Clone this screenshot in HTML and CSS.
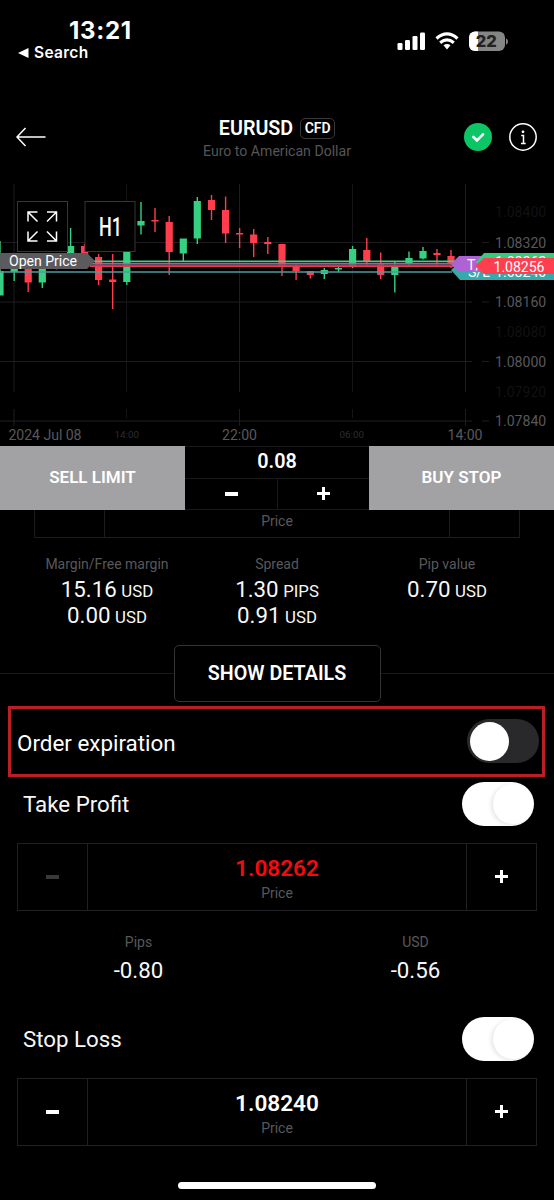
FILE: index.html
```html
<!DOCTYPE html>
<html lang="en">
<head>
<meta charset="utf-8">
<title>EURUSD order</title>
<link rel="stylesheet" href="styles.css">
</head>
<body>
<div class="phone">
  <div class="status">
    <div class="status-left">
      <div class="clock">13:21</div>
      <div class="back-app"><svg width="11" height="10" viewBox="0 0 11 10"><path d="M0 5 10.500 0v10z" fill="#fff"/></svg><span>Search</span></div>
    </div>
    <svg class="status-icons" width="118" height="24" viewBox="0 0 118 24">
      <g fill="#fff">
        <rect x="3.500" y="13" width="5" height="7" rx="1.300"/><rect x="11" y="10" width="5" height="10" rx="1.300"/><rect x="18.500" y="6" width="5" height="14" rx="1.300"/><rect x="26" y="2.500" width="5" height="17.500" rx="1.300"/>
        <path d="M49.500 15.300q3.500-2.600 7 0L53 19.500z"/>
      </g>
      <g fill="none" stroke="#fff" stroke-width="3.200"><path d="M42.500 8.500Q53-.6 63.500 8.500"/><path d="M46.200 12.700Q53 7 59.800 12.700"/></g>
      <clipPath id="batt"><rect x="75" y="1.500" width="36" height="19.500" rx="6"/></clipPath>
      <g clip-path="url(#batt)"><rect x="75" y="1" width="36" height="21" fill="#858585"/><rect x="75" y="1" width="9" height="21" fill="#fff"/></g>
      <path d="M112 8.500q2 .5 2 3t-2 3z" fill="#858585"/>
      <text x="92.300" y="17" class="batt-text" text-anchor="middle" textLength="21" lengthAdjust="spacingAndGlyphs">22</text>
    </svg>
  </div>

  <header class="header">
    <svg class="arrow" width="30" height="20" viewBox="0 0 30 20"><path d="M29.500 10H1M9.500 1 1 10l8.500 9" fill="none" stroke="#fff" stroke-width="1.500"/></svg>
    <div class="title">
      <div class="title-row"><span class="symbol">EURUSD</span><span class="tag">CFD</span></div>
      <div class="subtitle">Euro to American Dollar</div>
    </div>
    <div class="header-icons">
      <svg width="28" height="28" viewBox="0 0 28 28"><circle cx="14" cy="14" r="14" fill="#0cc666"/><path d="m9.400 14 3.500 3.400 6.100-6" fill="none" stroke="#fff" stroke-width="2.700" stroke-linecap="round"/></svg>
      <svg width="28" height="28" viewBox="0 0 28 28"><circle cx="14" cy="14" r="13.200" fill="none" stroke="#fff" stroke-width="1.500"/><circle cx="14" cy="8.800" r="1.400" fill="#fff"/><path d="M12.200 12.600h2.300v7.800M12 20.400h4.700" fill="none" stroke="#fff" stroke-width="1.500"/></svg>
    </div>
  </header>

  <svg class="chart" width="554" height="266" viewBox="0 180 554 266">
    <g class="grid">
      <path d="M0 242.500H472M482 242.500h7M0 302H472M482 302h7M0 361.500H472M482 361.500h7M0 421H472M482 421h7"/>
      <path d="M14 184V392M14 409v17M239.500 184V392M239.500 409v17M465.500 184V392M465.500 409v17"/>
      <path class="faint" d="M126.500 184V392M126.500 409v9M352.500 184V392M352.500 409v9"/>
    </g>
    <g class="axis">
      <text class="ghost" x="495" y="217">1.08400</text>
      <text x="495" y="247.500">1.08320</text>
      <text x="495" y="307">1.08160</text>
      <text class="ghost" x="495" y="337">1.08080</text>
      <text x="495" y="366.500">1.08000</text>
      <text class="ghost" x="495" y="397">1.07920</text>
      <text x="495" y="426">1.07840</text>
      <text x="8.500" y="440" textLength="73">2024 Jul 08</text>
      <text class="minor" x="114.500" y="437.500">14:00</text>
      <text x="222" y="440" textLength="35">22:00</text>
      <text class="minor" x="339.500" y="437.500">06:00</text>
      <text x="447.500" y="440" textLength="35">14:00</text>
    </g>
    <g id="candles"></g>
    <g fill="none">
      <path d="M90 264.500H455" stroke="#77506f" stroke-opacity=".85" stroke-width="3"/>
      <path d="M90 261.200H490" stroke="#3fd18a" stroke-width="1.500"/>
      <path d="M90 263.200H455" stroke="#8f8f98" stroke-width="1"/>
      <path d="M90 266.300H480" stroke="#e83a55" stroke-width="1.400"/>
      <path d="M0 272H452" stroke="#4f9a9e" stroke-width="1.600"/>
    </g>
    <path d="M0 253H87l8 8-8 8H0z" fill="#5b5a5f"/>
    <text class="label" x="9" y="266" textLength="68">Open Price</text>
    <path d="m451 270 9-8h94v18h-94z" fill="#36a9ad"/>
    <text class="label" x="468" y="277">S/L</text><text class="label" x="495" y="277">1.08240</text>
    <path d="m451 264 8-8h40v16h-40z" fill="#ae63d4"/>
    <text class="label" x="467" y="269.500">T/P</text>
    <path d="m476 262 8-9h70v17h-70z" fill="#35cc7d"/>
    <text class="label" x="495" y="267">1.08262</text>
    <path d="m475 266 9-8h70v16h-70z" fill="#ff3e50"/>
    <text class="label" x="493.500" y="271.500" textLength="51">1.08256</text>
    <g fill="#000" stroke="#37343a"><rect x="17.500" y="201.500" width="50" height="50"/><rect x="85" y="201.500" width="50" height="50"/></g>
    <path d="M37.500 212H28v9.500M28 212l9.500 9.500M47 212h9.500v9.500M56.500 212 47 221.500M28 231.500V241h9.500M28 241l9.500-9.500M56.500 231.500V241H47M56.500 241 47 231.500" fill="none" stroke="#fff" stroke-width="1.500"/>
    <text class="period" x="99" y="235.500" textLength="23" lengthAdjust="spacingAndGlyphs">H1</text>
  </svg>

  <div class="trade">
    <div class="side">SELL LIMIT</div>
    <div class="volume">
      <div class="volume-value">0.08</div>
      <div class="volume-btns"><div><i class="minus"></i></div><div><i class="plus"></i></div></div>
    </div>
    <div class="side">BUY STOP</div>
  </div>

  <div class="clipped"><div></div><div class="caption">Price</div><div></div></div>

  <div class="metrics">
    <div><div class="caption">Margin/Free margin</div><div class="value">15.16 <small>USD</small></div><div class="value">0.00 <small>USD</small></div></div>
    <div><div class="caption">Spread</div><div class="value">1.30 <small>PIPS</small></div><div class="value">0.91 <small>USD</small></div></div>
    <div><div class="caption">Pip value</div><div class="value">0.70 <small>USD</small></div></div>
  </div>

  <div class="details"><button class="details-btn">SHOW DETAILS</button></div>

  <div class="expiration"><span>Order expiration</span><span class="switch"></span></div>

  <div class="option"><span>Take Profit</span><span class="switch on"></span></div>
  <div class="stepper">
    <div class="disabled"><i class="minus"></i></div>
    <div class="field"><div class="amount red">1.08262</div><div class="caption">Price</div></div>
    <div><i class="plus"></i></div>
  </div>
  <div class="results">
    <div><div class="caption">Pips</div><div class="value">-0.80</div></div>
    <div><div class="caption">USD</div><div class="value">-0.56</div></div>
  </div>

  <div class="option"><span>Stop Loss</span><span class="switch on"></span></div>
  <div class="stepper">
    <div><i class="minus"></i></div>
    <div class="field"><div class="amount">1.08240</div><div class="caption">Price</div></div>
    <div><i class="plus"></i></div>
  </div>
  <div class="home"></div>
</div>
<script src="chart.js"></script>
</body>
</html>
```
FILE: chart.js
```js
// Each candle: centre x, wick top, body top, body bottom, wick bottom, rising
const candles = [
  [0, 241, 271, 295.5, 295.5, 1], [14.2, 262, 264, 272, 281, 1], [28.2, 260, 266, 282.5, 292, 0],
  [42.3, 260, 264, 282.5, 288, 1], [56.5, 253, 254, 256, 269.5, 0], [70.6, 228, 246, 258, 262, 1],
  [84.6, 244, 246, 258, 262, 0], [98.6, 254, 257, 280, 285, 0], [112.7, 254, 279.5, 282, 309, 0],
  [126.8, 244, 248, 282, 285, 1], [141, 202, 221, 225.5, 234.5, 1], [155, 208, 220, 221.5, 232, 0],
  [169.2, 216, 222, 252, 275, 0], [183.3, 238.5, 238.5, 253.5, 262, 1], [197.3, 197, 201, 238.5, 244, 1],
  [211.5, 195, 200, 210, 220, 0], [225.6, 196.5, 210, 233.5, 243, 0], [239.6, 228, 233, 234.5, 248, 0],
  [253.7, 229, 234.5, 243, 257, 0], [267.8, 237, 242, 244, 254, 0], [282, 244, 244, 266, 276, 0],
  [296.1, 264, 266.5, 271, 280, 0], [310.3, 271, 271, 275, 278.5, 0], [324.3, 268, 270, 274, 279, 1],
  [338.5, 266, 268, 269.5, 272, 1], [352.6, 246, 249, 267, 268, 1], [366.8, 238, 250, 262, 266, 0],
  [380.7, 252.5, 263.5, 275, 279, 0], [394.8, 262, 267, 275, 292.5, 1], [409, 251.5, 258, 263.5, 266, 1],
  [423, 247, 251, 258.5, 259.5, 1], [437, 249, 253, 255, 265, 0], [451, 250, 256, 263, 268, 0]
];
const layer = document.getElementById('candles');
for (const [x, high, top, bottom, low, up] of candles) {
  const p = document.createElementNS('http://www.w3.org/2000/svg', 'path');
  p.setAttribute('d', `M${x - 3.6} ${top}h7.2V${bottom}h-7.2zM${x - 0.7} ${high}h1.4V${low}h-1.4z`);
  p.setAttribute('fill', up ? '#35d080' : '#ff3d4d');
  layer.appendChild(p);
}
```
FILE: styles.css
```css
* { box-sizing: border-box; }
body { margin: 0; background: #000; color: #fff; font-family: Roboto, "Liberation Sans", sans-serif; }
.phone { width: 554px; height: 1200px; overflow: hidden; background: #000; display: flex; flex-direction: column; }
svg { display: block; }

.status { height: 104px; display: flex; justify-content: space-between; font-family: Inter, sans-serif; }
.status-left { padding: 18px 0 0 18px; }
.clock { font-size: 24px; line-height: 26px; font-weight: 700; margin-left: 51px; letter-spacing: .7px; }
.back-app { display: flex; align-items: center; gap: 5px; font-size: 15.5px; font-weight: 600; line-height: 16px; letter-spacing: .3px; padding-top: 1px; }
.status-icons { margin: 30px 42px 0 0; }
.batt-text { font: 800 16px Inter, sans-serif; fill: #222; }

.header { height: 76px; display: grid; grid-template-columns: 100px 1fr 100px; }
.arrow { margin: 23px 0 0 16px; }
.title { text-align: center; padding-top: 13px; }
.title-row { display: flex; justify-content: center; align-items: center; gap: 7px; height: 22px; }
.symbol { font-size: 19.7px; font-weight: 600; }
.tag { font-size: 14px; font-weight: 600; line-height: 19px; height: 21px; padding: 0 3.5px; border: 1px solid #38383b; border-radius: 5px; }
.subtitle { font-size: 14.1px; line-height: 18px; margin-top: 3px; color: #555558; }
.header-icons { display: flex; gap: 17px; padding: 19px 0 0 10px; }

.chart { flex: none; }
.grid { fill: none; stroke: #1e1c20; }
.grid .faint { stroke: #151416; }
.axis { fill: #58585b; font-size: 14.1px; }
.axis .ghost { fill: #111112; }
.axis .minor { fill: #2d2d2f; font-size: 9.8px; }
.label { fill: #fff; font-size: 14.1px; }
.period { fill: #fff; font-size: 25.5px; font-weight: 500; }

.trade { height: 64px; flex: none; display: grid; grid-template-columns: 185px 1fr 185px; }
.side { background: #a2a2a4; display: flex; align-items: center; justify-content: center; padding-bottom: 2px; font-size: 17px; font-weight: 600; }
.volume { border: solid #18181a; border-width: 1px 0; display: flex; flex-direction: column; }
.volume-value { height: 31px; line-height: 30px; text-align: center; font-size: 19.8px; font-weight: 600; }
.volume-btns { flex: 1; display: grid; grid-template-columns: 1fr 1fr; border-top: 1px solid #18181a; }
.volume-btns > div { display: flex; align-items: center; justify-content: center; padding-bottom: 1px; }
.volume-btns > div + div { border-left: 1px solid #18181a; }
.minus { width: 13px; height: 4px; background: #fff; }
.plus { width: 13px; height: 13px; background: linear-gradient(#fff, #fff) center / 13px 3px no-repeat, linear-gradient(#fff, #fff) center / 3px 13px no-repeat; }

.caption { color: #58585b; font-size: 14px; line-height: 18px; text-align: center; }
.clipped { height: 28px; flex: none; margin: 0 34px; border: 1px solid #1c1c1e; border-top: 0; display: grid; grid-template-columns: 69px 1fr 69px; }
.clipped .caption { border: solid #1c1c1e; border-width: 0 1px; padding-top: 2px; }

.metrics { height: 107px; flex: none; padding: 17px 22px 0; display: grid; grid-template-columns: repeat(3, 170px); text-align: center; }
.metrics .value { font-size: 22.3px; line-height: 26px; height: 26px; }
.metrics .caption { margin-bottom: 3px; }
.value { color: #f7f7f7; }
.value small { font-size: 16.8px; line-height: 1; margin-left: -1px; }

.details { height: 57px; flex: none; display: flex; justify-content: center; background: linear-gradient(#19191b, #19191b) center / 100% 1px no-repeat; }
.details-btn { width: 207px; height: 57px; padding: 0; background: #000; border: 1px solid #333336; border-radius: 5px; color: #fff; font: 600 19.7px Roboto, sans-serif; }

.expiration { height: 71px; flex: none; margin: 4px 9px 0 8px; padding: 0 3px 0 6px; border: 3px solid #bb1f25; display: flex; align-items: center; justify-content: space-between; font-size: 22.4px; }
.expiration .switch { margin-top: -1px; }
.expiration span:first-child { padding-top: 3px; }
.switch { width: 72px; height: 44px; border-radius: 22px; background: #29292b; display: flex; align-items: center; padding: 0 3px; }
.switch::before { content: ""; width: 39px; height: 39px; border-radius: 50%; background: #fff; }
.switch.on { background: #fff; justify-content: flex-end; padding: 0 1px; }
.switch.on::before { width: 40px; height: 40px; box-shadow: -2px 1px 4px rgba(0, 0, 0, .1); }

.option { height: 44px; flex: none; margin-top: 5px; padding: 0 20px 0 23px; display: flex; align-items: center; justify-content: space-between; font-size: 22.3px; color: #f7f7f7; }
.stepper { height: 68px; flex: none; margin: 17px 17px 0; border: 1px solid #202022; display: grid; grid-template-columns: 69px 1fr 69px; }
.stepper > div { display: flex; align-items: center; justify-content: center; padding-bottom: 1px; }
.stepper .field { display: block; border: solid #202022; border-width: 0 1px; text-align: center; padding-top: 11px; }
.amount { font-size: 22.6px; font-weight: 600; line-height: 28px; margin-bottom: 1px; }
.amount.red { color: #f50a0e; }
.disabled .minus { background: #39393b; }
.results { height: 101px; flex: none; display: grid; grid-template-columns: 1fr 1fr; padding-top: 22px; text-align: center; }
.results .value { font-size: 22.3px; line-height: 28px; margin-top: 5px; }
.home { width: 198px; height: 7px; flex: none; margin: 36px auto 0; border-radius: 4px; background: #fff; }
```
